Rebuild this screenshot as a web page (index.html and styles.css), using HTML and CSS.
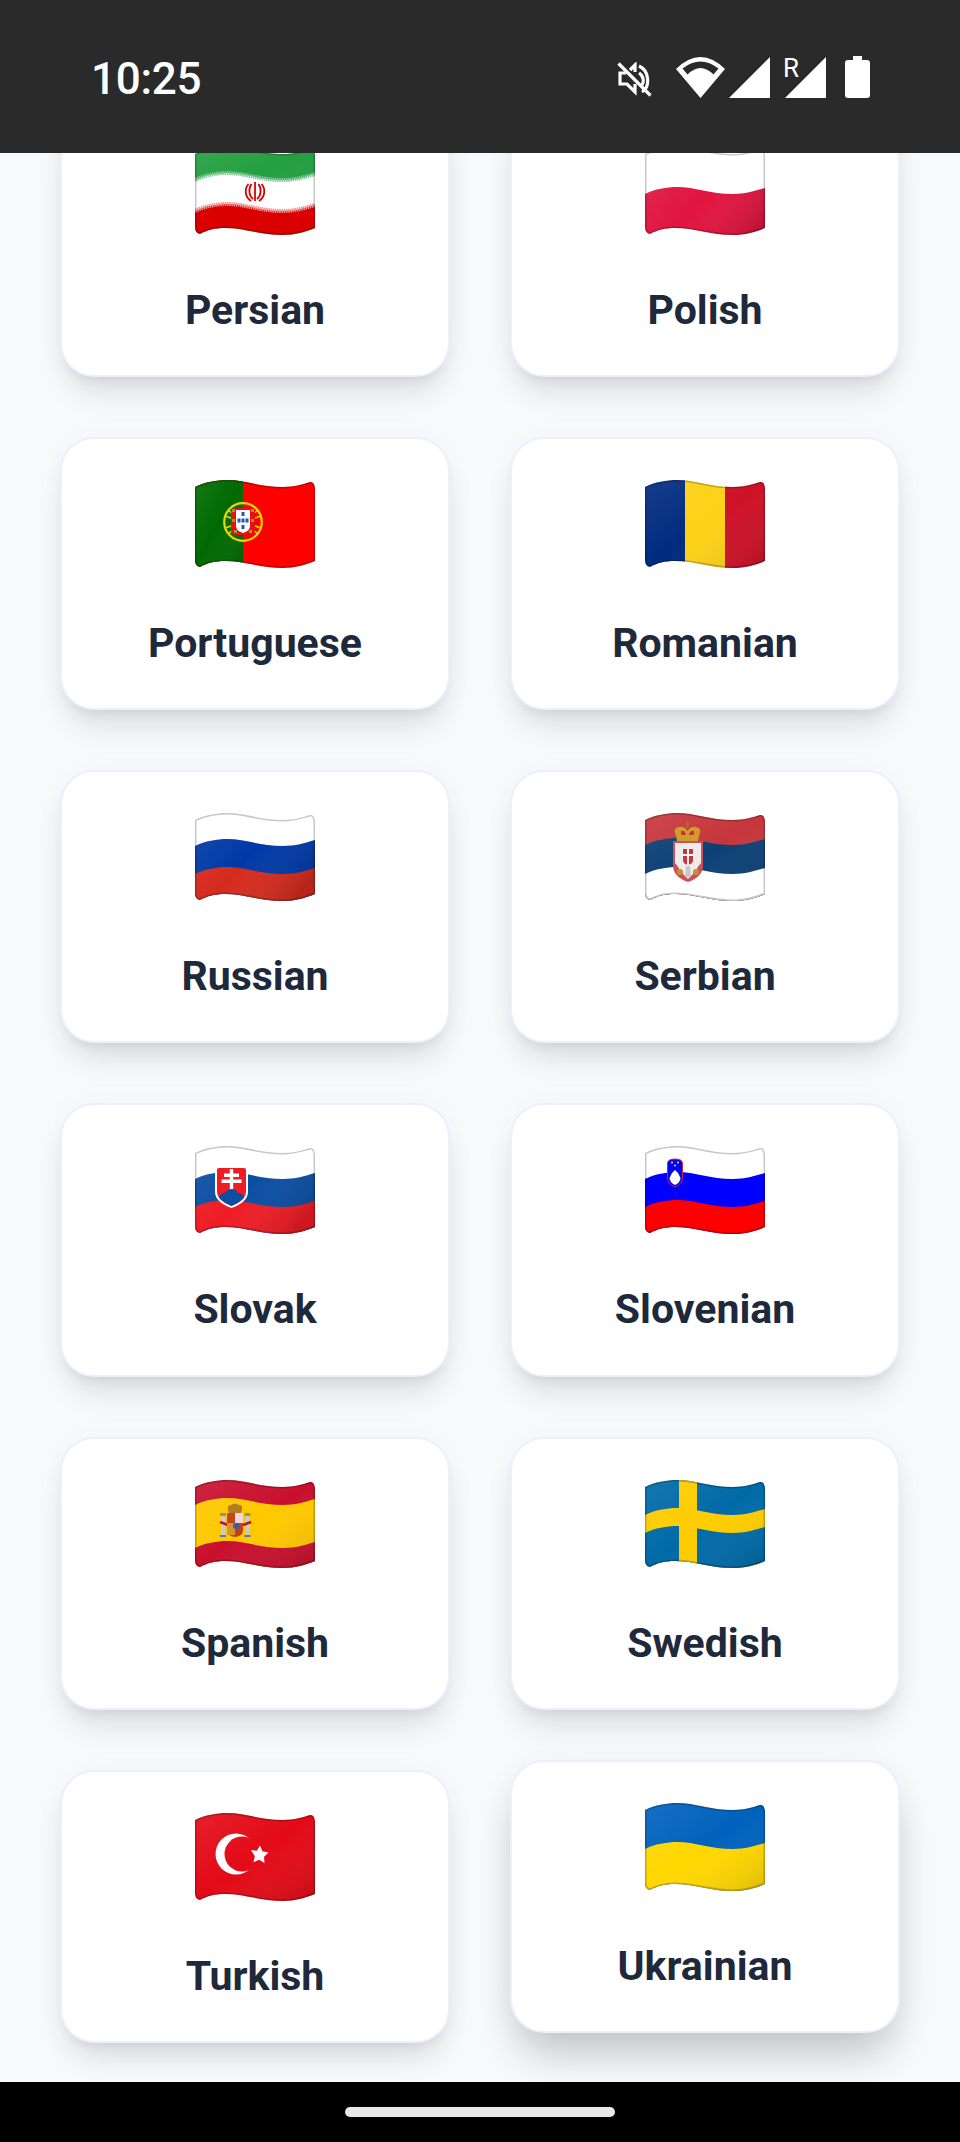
FILE: index.html
```html
<!DOCTYPE html>
<html lang="en">
<head>
<meta charset="utf-8">
<title>Languages</title>
<link rel="stylesheet" href="styles.css">
</head>
<body>
<svg class="defs" aria-hidden="true">
  <defs>
    <path id="outline" d="M0,7 C10,2 22,0 32,0 C50,0 65,7 88,7 C100,7 108,4 115,2 Q119,1 120,8 V81 C110,85 100,88 88,88 C65,88 50,81 30,81 C20,81 12,83 5,87 Q0,86 0,80 Z"/>
    <clipPath id="wave"><use href="#outline"/></clipPath>
    <path id="fold" d="M0,7 C10,2 22,0 32,0 C50,0 65,7 88,7 C100,7 110,4 120,1 V110 H0 Z"/>
    <path id="crease" d="M0,7 C10,2 22,0 32,0 C50,0 65,7 88,7 C100,7 110,4 120,1" fill="none"/>
    <linearGradient id="sheen" x1="0" y1="0" x2="1" y2="1">
      <stop offset="0" stop-color="#fff" stop-opacity=".09"/>
      <stop offset=".5" stop-color="#fff" stop-opacity="0"/>
      <stop offset="1" stop-color="#000" stop-opacity=".14"/>
    </linearGradient>
    <linearGradient id="sheen-low" gradientUnits="userSpaceOnUse" x1="0" y1="-20" x2="100" y2="60">
      <stop offset="0" stop-color="#fff" stop-opacity=".09"/>
      <stop offset=".5" stop-color="#fff" stop-opacity="0"/>
      <stop offset="1" stop-color="#000" stop-opacity=".14"/>
    </linearGradient>
    <g id="finish">
      <use href="#outline" fill="none" stroke="#000" stroke-opacity=".22" stroke-width="3"/>
    </g>
  </defs>
</svg>

<div class="screen">
  <header class="status">
    <span class="time">10:25</span>
    <div class="status-icons">
      <svg class="i-mute" viewBox="0 0 35 35"><path d="M1.500,1.500 L33.500,33.500" stroke="#fff" stroke-width="3.200" fill="none"/><path d="M9,11 H3 V22 H10 L18,30 V22 M13,8 L18,3 V10 M22,4 C33,9 33,25 25,30 M22,11 C27,14 27,20 25,23" stroke="#fff" stroke-width="3.200" fill="none"/></svg>
      <svg class="i-wifi" viewBox="0 0 49 41"><path d="M24.500,41 L0,12 Q24.500,-12 49,12 Z" fill="#fff"/><path d="M6.500,11.500 Q24.500,-2.500 42.500,11.500 L37.500,17.500 Q24.500,4.500 11.500,17.500 Z" fill="#2a2a2a"/></svg>
      <svg class="i-signal" viewBox="0 0 41 41"><path d="M0,41 L41,0 V41 Z" fill="#fff"/></svg>
      <div class="roaming">
        <svg class="i-signal" viewBox="0 0 41 41"><path d="M0,41 L41,0 V41 Z" fill="#fff"/></svg>
        <span class="r">R</span>
      </div>
      <svg class="i-battery" viewBox="0 0 25 42"><path d="M8,0 H17 V4 H22 Q25,4 25,7 V39 Q25,42 22,42 H3 Q0,42 0,39 V7 Q0,4 3,4 H8 Z" fill="#fff"/></svg>
    </div>
  </header>

  <main class="content">
    <div class="grid">

      <article class="card">
        <svg class="flag" viewBox="0 0 120 88"><g clip-path="url(#wave)">
          <rect width="120" height="88" fill="#239f40"/>
          <rect width="120" height="60" fill="url(#sheen)"/>
          <use href="#fold" y="26" fill="#fff"/>
          <use href="#fold" y="57" fill="#da0000"/>
          <use href="#crease" y="26" stroke="#7fc596" stroke-width="4" stroke-dasharray="1.500 .7"/>
          <use href="#crease" y="57" stroke="#ee9090" stroke-width="4" stroke-dasharray="1.500 .7"/>
          <g fill="none" stroke="#da0000" stroke-width="1.800"><path d="M60,35 V54"/><path d="M56.500,37 C53,42 54,49 58,52"/><path d="M63.500,37 C67,42 66,49 62,52"/><path d="M53.500,37 C49,42 50,50 56,54"/><path d="M66.500,37 C71,42 70,50 64,54"/></g>
          <use href="#finish"/>
        </g></svg>
        <h2 class="name">Persian</h2>
      </article>

      <article class="card">
        <svg class="flag" viewBox="0 0 120 88"><g clip-path="url(#wave)">
          <rect width="120" height="88" fill="#fff"/>
          <use href="#fold" y="40" fill="#e0143f"/>
          <use href="#fold" y="40" fill="url(#sheen-low)"/>
          <use href="#finish"/>
        </g></svg>
        <h2 class="name">Polish</h2>
      </article>

      <article class="card">
        <svg class="flag" viewBox="0 0 120 88"><g clip-path="url(#wave)">
          <rect width="120" height="88" fill="#f00"/>
          <rect width="48" height="88" fill="#006a00"/>
          <rect width="48" height="88" fill="url(#sheen)"/>
          <path d="M30,36 L66,48 M30,48 L66,36 M33,30 L63,54 M33,54 L63,30" stroke="#e8d800" stroke-width="1.600"/>
          <circle cx="48" cy="42" r="18.800" fill="none" stroke="#e8d800" stroke-width="2.200"/>
          <rect x="36" y="28" width="24" height="27" rx="5" fill="#e81010"/>
          <path d="M41,30 H55 V46 Q55,51 48,53 Q41,51 41,46 Z" fill="#fff"/>
          <g fill="#2a55b0"><rect x="46.500" y="32" width="3" height="4"/><rect x="42.500" y="38.500" width="3" height="4"/><rect x="46.500" y="38.500" width="3" height="4"/><rect x="50.500" y="38.500" width="3" height="4"/><rect x="46.500" y="45" width="3" height="4"/></g>
          <g fill="#b09020"><rect x="37" y="29" width="3" height="3"/><rect x="56" y="29" width="3" height="3"/><rect x="37" y="39" width="3" height="3"/><rect x="56" y="39" width="3" height="3"/><rect x="39" y="50" width="3" height="3"/><rect x="54" y="50" width="3" height="3"/></g>
          <use href="#finish"/>
        </g></svg>
        <h2 class="name">Portuguese</h2>
      </article>

      <article class="card">
        <svg class="flag" viewBox="0 0 120 88"><g clip-path="url(#wave)">
          <rect width="40" height="88" fill="#002b7f"/>
          <rect x="40" width="40" height="88" fill="#fcd116"/>
          <rect x="80" width="40" height="88" fill="#ce1126"/>
          <rect width="120" height="88" fill="url(#sheen)"/>
          <use href="#finish"/>
        </g></svg>
        <h2 class="name">Romanian</h2>
      </article>

      <article class="card">
        <svg class="flag" viewBox="0 0 120 88"><g clip-path="url(#wave)">
          <rect width="120" height="88" fill="#fff"/>
          <use href="#fold" y="26" fill="#0039a6"/>
          <use href="#fold" y="54" fill="#d52b1e"/>
          <use href="#fold" y="26" fill="url(#sheen-low)"/>
          <use href="#finish"/>
        </g></svg>
        <h2 class="name">Russian</h2>
      </article>

      <article class="card">
        <svg class="flag" viewBox="0 0 120 88"><g clip-path="url(#wave)">
          <rect width="120" height="88" fill="#c6363c"/>
          <use href="#fold" y="25" fill="#0c4076"/>
          <rect width="120" height="88" fill="url(#sheen)"/>
          <use href="#fold" y="54" fill="#fff"/>
          <use href="#finish"/>
        </g>
        <path d="M31,23 Q27,15 34,14 Q39,13 42.500,18 Q46,13 51,14 Q58,15 54,23 L53,28 H32 Z" fill="#d39a2c"/>
        <path d="M36,18 Q40,17 41,22 H36 Z M49,18 Q45,17 44,22 H49 Z" fill="#c6363c"/>
        <path d="M42.500,8 V15" stroke="#a87818" stroke-width="2"/>
        <path d="M28,28 H58 V52 Q58,64 43,69 Q28,64 28,52 Z" fill="#d05058"/>
        <path d="M30,30 H56 V50 Q52,54 51,58 L43,66 L35,58 Q34,54 30,50 Z" fill="#ececec"/>
        <path d="M38,36 H48 V47 Q48,51 43,52 Q38,51 38,47 Z" fill="#c6363c"/>
        <path d="M43,36 V52 M38,42 H48" stroke="#fff" stroke-width="1.800"/>
        <path d="M41,53 H45 L46,64 H40 Z" fill="#c8c8c8"/>
        <circle cx="35" cy="59" r="3" fill="#c8902c"/><circle cx="51" cy="59" r="3" fill="#c8902c"/>
        </svg>
        <h2 class="name">Serbian</h2>
      </article>

      <article class="card">
        <svg class="flag" viewBox="0 0 120 88"><g clip-path="url(#wave)">
          <rect width="120" height="88" fill="#fff"/>
          <use href="#fold" y="26" fill="#0b4ea2"/>
          <use href="#fold" y="54" fill="#ee1c25"/>
          <use href="#fold" y="26" fill="url(#sheen-low)"/>
          <use href="#finish"/>
        </g>
        <path d="M23,20 H50 Q53,20 53,23 V46 Q53,56 36.500,62 Q20,56 20,46 V23 Q20,20 23,20 Z" fill="#fff"/>
        <path d="M24,22 H49 Q51,22 51,24 V46 Q51,54 36.500,60 Q22,54 22,46 V24 Q22,22 24,22 Z" fill="#ee1c25"/>
        <path d="M34.800,23 H38.200 V27.500 H44 V31 H38.200 V33.500 H46.500 V37 H38.200 V46 H34.800 V37 H26.500 V33.500 H34.800 V31 H29 V27.500 H34.800 Z" fill="#fff"/>
        <path d="M24,52 Q25,47 30,47 Q33,43 37,43 Q41,43 43,47 Q48,47 49,52 Q44,57 36.500,60 Q29,57 24,52 Z" fill="#0b4ea2"/>
        </svg>
        <h2 class="name">Slovak</h2>
      </article>

      <article class="card">
        <svg class="flag" viewBox="0 0 120 88"><g clip-path="url(#wave)">
          <rect width="120" height="88" fill="#fff"/>
          <use href="#fold" y="26" fill="#00f"/>
          <use href="#fold" y="54" fill="#f00"/>
          <use href="#finish"/>
        </g>
        <path d="M22.500,17 Q23,13 30,13 Q37,13 37.500,17 V31 Q37.500,38 30,41 Q22.500,38 22.500,31 Z" fill="#00f" stroke="#c8283c" stroke-width="1"/>
        <path d="M24.500,32 L27,27 L30,24 L33,27 L35.500,32 Q35,37 30,39 Q25,37 24.500,32 Z" fill="#fff"/>
        <g fill="#f0e060"><circle cx="27" cy="16.500" r="1"/><circle cx="33" cy="16.500" r="1"/><circle cx="30" cy="19.500" r="1"/></g>
        </svg>
        <h2 class="name">Slovenian</h2>
      </article>

      <article class="card">
        <svg class="flag" viewBox="0 0 120 88"><g clip-path="url(#wave)">
          <rect width="120" height="88" fill="#c8102e"/>
          <use href="#fold" y="18" fill="#ffc800"/>
          <use href="#fold" y="61" fill="#c8102e"/>
          <rect x="26" y="36" width="4" height="19" fill="#c8ccc8"/>
          <rect x="50.500" y="36" width="4" height="19" fill="#c8ccc8"/>
          <rect x="25" y="33" width="6" height="3" fill="#a89030"/>
          <rect x="49.500" y="33" width="6" height="3" fill="#a89030"/>
          <rect x="25" y="55" width="6" height="2" fill="#5a78a0"/>
          <rect x="49.500" y="55" width="6" height="2" fill="#5a78a0"/>
          <path d="M25,42 L33,45 M56,42 L48,45" stroke="#c60b1e" stroke-width="2.500"/>
          <path d="M33,30 Q32,25 36,25 Q40,22 44,25 Q48,25 47,30 L46,33 H34 Z" fill="#b0781c"/>
          <path d="M32,33 H48 V50 Q48,56 40,57 Q32,56 32,50 Z" fill="#c0401c"/>
          <rect x="40" y="33" width="8" height="10" fill="#eed6d8"/>
          <rect x="32" y="43" width="8" height="12" fill="#d89428"/>
          <circle cx="41" cy="46" r="3" fill="#3a5aa0"/>
          <rect width="120" height="88" fill="url(#sheen)"/>
          <use href="#finish"/>
        </g></svg>
        <h2 class="name">Spanish</h2>
      </article>

      <article class="card">
        <svg class="flag" viewBox="0 0 120 88"><g clip-path="url(#wave)">
          <rect width="120" height="88" fill="#006aa7"/>
          <use href="#fold" y="28" fill="#fecc00"/>
          <use href="#fold" y="46" fill="#006aa7"/>
          <rect x="34" width="18" height="88" fill="#fecc00"/>
          <rect width="120" height="88" fill="url(#sheen)"/>
          <use href="#finish"/>
        </g></svg>
        <h2 class="name">Swedish</h2>
      </article>

      <article class="card">
        <svg class="flag" viewBox="0 0 120 88"><g clip-path="url(#wave)">
          <rect width="120" height="88" fill="#e30a17"/>
          <circle cx="41" cy="41" r="20.500" fill="#fff"/>
          <circle cx="47" cy="41" r="17.500" fill="#e30a17"/>
          <path d="M56,37 L61.800,37.800 L65,32.500 L67.500,38.200 L73.500,39.500 L69,43.700 L69.500,50 L64.200,46.800 L58.500,49.300 L59.800,43.200 Z" fill="#fff"/>
          <rect width="120" height="88" fill="url(#sheen)"/>
          <use href="#finish"/>
        </g></svg>
        <h2 class="name">Turkish</h2>
      </article>

      <article class="card card-raised">
        <svg class="flag" viewBox="0 0 120 88"><g clip-path="url(#wave)">
          <rect width="120" height="88" fill="#0062bd"/>
          <use href="#fold" y="39" fill="#ffd700"/>
          <rect width="120" height="88" fill="url(#sheen)"/>
          <use href="#finish"/>
        </g></svg>
        <h2 class="name">Ukrainian</h2>
      </article>

    </div>
  </main>

  <footer class="nav"><span class="pill"></span></footer>
</div>
</body>
</html>
```

FILE: styles.css
```css
html, body {
  margin: 0;
  padding: 0;
}

body {
  font-family: Roboto, "Liberation Sans", sans-serif;
  background: #f8fafc;
}

.defs {
  position: absolute;
  width: 0;
  height: 0;
}

.screen {
  width: 960px;
  height: 2142px;
  display: flex;
  flex-direction: column;
  overflow: hidden;
}

.status {
  flex: 0 0 153px;
  background: #2a2a2a;
  display: flex;
  align-items: flex-start;
  justify-content: space-between;
  padding: 56px 90px 0 91px;
  box-sizing: border-box;
  position: relative;
  z-index: 2;
}

.time {
  color: #fff;
  font-size: 44px;
  font-weight: 500;
  line-height: 46px;
  letter-spacing: -0.3px;
}

.status-icons {
  display: flex;
  align-items: flex-start;
}

.i-mute {
  width: 35px;
  height: 35px;
  margin: 6px 24px 0 0;
}

.i-wifi {
  width: 49px;
  height: 41px;
  margin: 1px 4px 0 0;
}

.i-signal {
  display: block;
  width: 41px;
  height: 41px;
  margin-top: 1px;
}

.roaming {
  position: relative;
  margin: 0 19px 0 15px;
}

.r {
  position: absolute;
  left: -2px;
  top: 0;
  color: #fff;
  font-size: 26px;
  font-weight: 400;
  line-height: 24px;
}

.i-battery {
  width: 25px;
  height: 42px;
}

.content {
  flex: 1 1 auto;
  min-height: 0;
  overflow: hidden;
}

.grid {
  display: grid;
  grid-template-columns: 1fr 1fr;
  column-gap: 60px;
  row-gap: 60px;
  padding: 0 60px 60px;
  margin-top: -49.5px;
}

.card {
  background: #fff;
  border: 2px solid #eeeeff;
  border-radius: 34px;
  padding: 41px 20px 0;
  height: 273.33px;
  box-sizing: border-box;
  display: flex;
  flex-direction: column;
  align-items: center;
  box-shadow: 0 22px 32px -6px rgba(0, 0, 0, 0.11), 0 8px 12px -6px rgba(0, 0, 0, 0.08), 0 0 34px rgba(0, 0, 0, 0.03);
}

.card-raised {
  transform: translateY(-10px);
  box-shadow: 0 28px 44px -8px rgba(0, 0, 0, 0.22), 0 0 34px rgba(0, 0, 0, 0.035);
}

.flag {
  display: block;
  width: 120px;
  height: 88px;
  flex: none;
}

.name {
  margin: 49px 0 0;
  color: #1e293b;
  font-size: 41px;
  font-weight: 700;
  line-height: 52px;
}

.nav {
  flex: 0 0 60px;
  background: #000;
  display: flex;
  align-items: flex-start;
  justify-content: center;
  padding-top: 25px;
  box-sizing: border-box;
  position: relative;
  z-index: 2;
}

.pill {
  width: 270px;
  height: 10px;
  border-radius: 5px;
  background: #e8e8e8;
}
```
